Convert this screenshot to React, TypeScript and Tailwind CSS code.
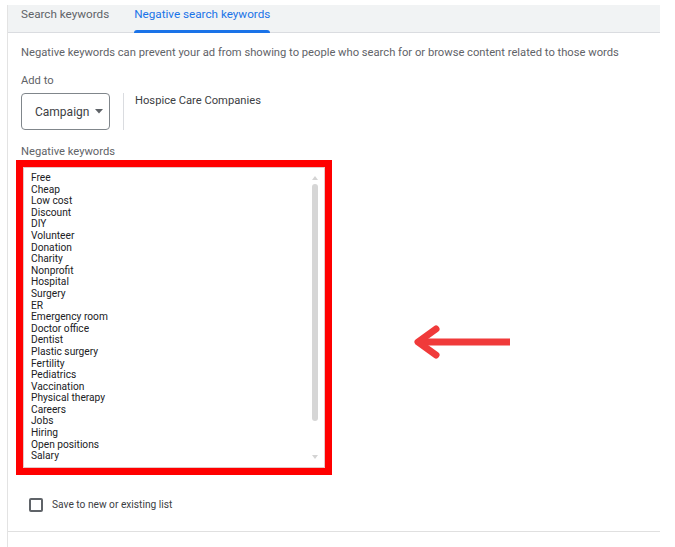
import React from "react";

const keywords = [
  "Free","Cheap","Low cost","Discount","DIY","Volunteer","Donation","Charity","Nonprofit","Hospital","Surgery","ER","Emergency room","Doctor office","Dentist","Plastic surgery","Fertility","Pediatrics","Vaccination","Physical therapy","Careers","Jobs","Hiring","Open positions","Salary",
];

export default function App() {
  return (
    <div className="relative w-[675px] h-[547px] bg-white pt-[5px] pl-[7px] overflow-hidden" style={{ fontFamily: "Roboto, 'Liberation Sans', sans-serif" }}>
      <div className="w-[653px] h-[542px] border-l border-[#e3e3e3] flex flex-col">
        {/* Tabs */}
        <div className="h-[28px] bg-[#f1f3f4] border-b border-[#dadce0] flex items-stretch pl-[13px] gap-[25px]">
          <div className="pt-[2px] text-[11.7px] leading-[14px] text-[#5f6368]">Search keywords</div>
          <div className="relative pt-[2px] text-[11.7px] leading-[14px] text-[#1a73e8]">
            Negative search keywords
            <div className="absolute left-0 right-0 bottom-[-1px] h-[3px] rounded-t-[3px] bg-[#1a73e8]" />
          </div>
        </div>

        <div className="pl-[13px] flex flex-col">
          <div className="mt-[13px] text-[11.2px] leading-[14px] text-[#5f6368]">
            Negative keywords can prevent your ad from showing to people who search for or browse content related to those words
          </div>
          <div className="mt-[14px] text-[11.2px] leading-[14px] text-[#5f6368]">Add to</div>
          <div className="mt-[5px] flex items-start">
            <div className="w-[89px] h-[37px] border border-[#80868b] rounded-[4px] flex items-center pl-[13px] gap-[6px] text-[12px] text-[#3c4043]">
              Campaign
              <svg width="8" height="5" viewBox="0 0 8 5"><path d="M0 0h8L4 4.5z" fill="#5f6368" /></svg>
            </div>
            <div className="ml-[13px] w-px h-[37px] bg-[#dadce0]" />
            <div className="ml-[11px] mt-[1px] text-[11.2px] leading-[14px] text-[#3c4043]">Hospice Care Companies</div>
          </div>
          <div className="mt-[15px] text-[11.2px] leading-[14px] text-[#5f6368]">Negative keywords</div>

          {/* Red highlighted textarea */}
          <div className="mt-[1px] ml-[-5px] w-[316px] h-[315px] border-[7px] border-[#ff0000] bg-white">
            <div className="w-full h-full border border-[#e4c8c8] flex">
              <div className="flex-1 pl-[7px] pt-[4px] flex flex-col text-[10.2px] leading-[11.6px] text-[#202124]">
                {keywords.map((k) => (
                  <div key={k}>{k}</div>
                ))}
              </div>
              <div className="w-[10px] mr-[4px] flex flex-col items-center pt-[8px] pb-[8px]">
                <svg width="6" height="4" viewBox="0 0 6 4"><path d="M0 4L3 0l3 4z" fill="#d4d4d4" /></svg>
                <div className="mt-[4px] w-[6px] h-[237px] rounded-[3px] bg-[#d6d6d6]" />
                <div className="flex-1" />
                <svg width="6" height="4" viewBox="0 0 6 4"><path d="M0 0h6L3 4z" fill="#d4d4d4" /></svg>
              </div>
            </div>
          </div>

          <div className="mt-[22px] ml-[8px] flex items-center gap-[9px]">
            <div className="w-[14px] h-[14px] border-2 border-[#5f6368] rounded-[2px]" />
            <div className="text-[10.2px] text-[#3c4043]">Save to new or existing list</div>
          </div>
        </div>
        <div className="mt-[19px] h-px bg-[#e0e0e0]" />
      </div>

      {/* Annotation arrow */}
      <svg className="absolute left-[410px] top-[322px]" width="110" height="42" viewBox="0 0 110 42">
        <path d="M8 20H100" stroke="#f03a3a" strokeWidth="7" strokeLinecap="butt" />
        <path d="M26 7L8 20L26 33" stroke="#f03a3a" strokeWidth="7" strokeLinecap="round" strokeLinejoin="round" fill="none" />
      </svg>
    </div>
  );
}
